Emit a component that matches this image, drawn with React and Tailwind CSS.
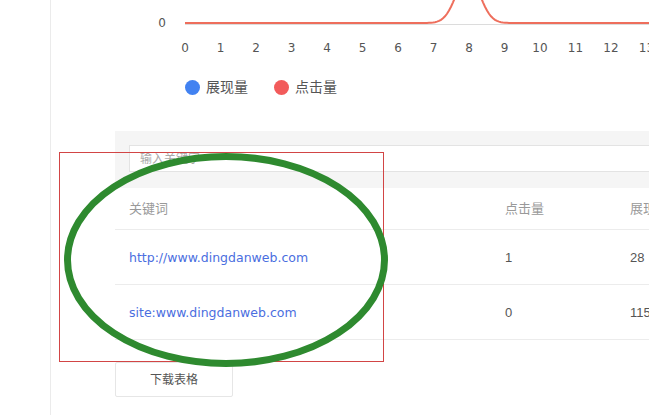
const xs = [0, 1, 2, 3, 4, 5, 6, 7, 8, 9, 10, 11, 12, 13];

// 点击量曲线：第 8 天有一个峰值
const curve = () => {
  const pts = [];
  for (let x = 70; x <= 534; x += 2) {
    const y = 23 - 47.7 * Math.exp(-(((x - 353) / 16.4) ** 2));
    pts.push(`${x},${y.toFixed(2)}`);
  }
  return 'M' + pts.join(' L');
};

const Chart = () => (
  <svg width="534" height="62" className="block overflow-visible">
    <text x="51" y="27" textAnchor="end" fontSize="12" fill="#555" fontFamily="'DejaVu Sans', sans-serif">0</text>
    <line x1="70" y1="24.5" x2="534" y2="24.5" stroke="#dcdcdc" strokeWidth="1" />
    <path d={curve()} fill="none" stroke="#ee6e5c" strokeWidth="2" />
    {xs.map(i => (
      <text key={i} x={70 + i * 35.5} y="52" textAnchor="middle" fontSize="12" fill="#555" fontFamily="'DejaVu Sans', sans-serif">
        {i}
      </text>
    ))}
  </svg>
);

const rows = [
  { kw: 'http://www.dingdanweb.com', clicks: 1, views: 28 },
  { kw: 'site:www.dingdanweb.com', clicks: 0, views: 115 },
];

export default function App() {
  return (
    <div className="relative w-[649px] h-[415px] overflow-hidden bg-white font-['Liberation_Sans','Noto_Sans_CJK_SC',sans-serif]">
      <div className="flex h-full">
        <div className="w-[51px] shrink-0 border-r border-[#ebebeb]" />

        <div className="flex-1 pl-[64px] min-w-0">
          <Chart />

          {/* 图例 */}
          <div className="flex items-center h-[52px] pl-[70px] pb-[2px] text-[14px] text-[#555]">
            <span className="w-[15px] h-[15px] rounded-full bg-[#4282f1]" />
            <span className="ml-[6px]">展现量</span>
            <span className="ml-[26px] w-[15px] h-[15px] rounded-full bg-[#f25b5b]" />
            <span className="ml-[6px]">点击量</span>
          </div>

          <div className="w-[700px] mt-[17px]">
            {/* 搜索 */}
            <div className="bg-[#f5f5f5] pt-[14px] pb-[16px] pl-[14px]">
              <div className="h-[27px] bg-white border border-[#e3e3e3] flex items-center pl-[10px] text-[12px] text-[#aaa]">
                输入关键字
              </div>
            </div>

            {/* 表格 */}
            <div className="flex h-[42px] items-center border-b border-[#ececec] text-[13px] text-[#999]">
              <div className="w-[390px] pl-[14px]">关键词</div>
              <div className="w-[125px]">点击量</div>
              <div>展现量</div>
            </div>
            {rows.map(r => (
              <div key={r.kw} className="flex h-[55px] items-center border-b border-[#ececec] text-[13px]">
                <div className="w-[390px] pl-[14px] pt-[2px] text-[#4a6ee0] font-['DejaVu_Sans',sans-serif] text-[12.5px]">{r.kw}</div>
                <div className="w-[125px] pt-[2px] text-[#555]">{r.clicks}</div>
                <div className="pt-[2px] text-[#555]">{r.views}</div>
              </div>
            ))}
          </div>

          <button className="mt-[22px] w-[118px] h-[35px] border border-[#e6e6e6] bg-white text-[12px] text-[#555] rounded-[2px]">
            下载表格
          </button>
        </div>
      </div>

      {/* 标注 */}
      <div className="absolute left-[59px] top-[152px] w-[325px] h-[210px] border border-[#d24545]" />
      <svg className="absolute left-0 top-0 pointer-events-none" width="649" height="415">
        <ellipse cx="226" cy="260" rx="158.5" ry="103.5" fill="none" stroke="#2e8a2f" strokeWidth="7" />
      </svg>
    </div>
  );
}
